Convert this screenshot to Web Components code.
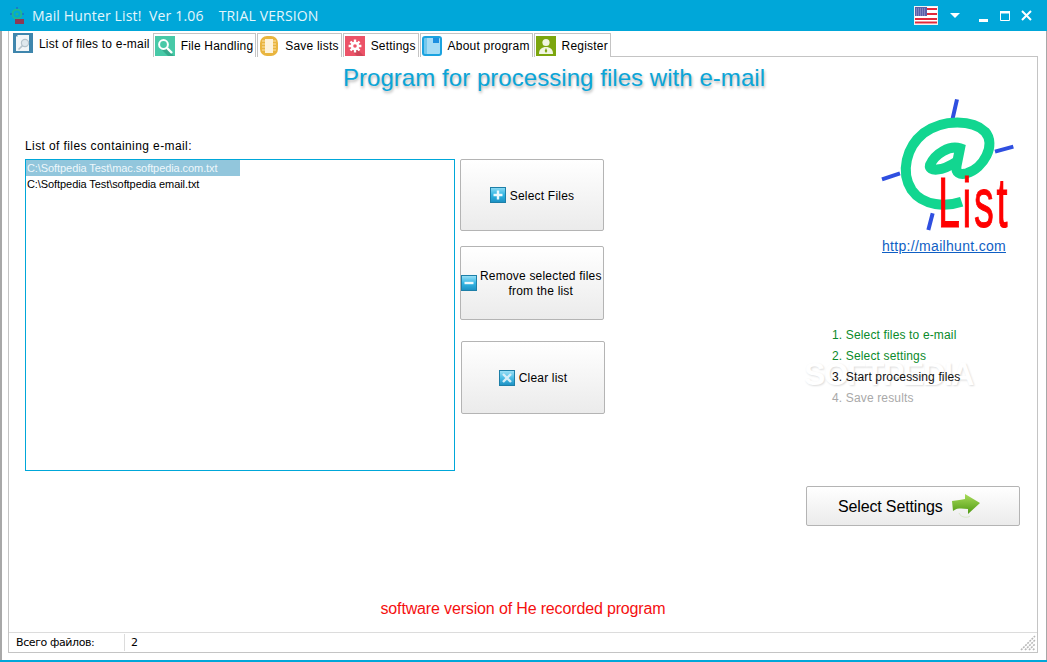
<!DOCTYPE html>
<html>
<head>
<meta charset="utf-8">
<title>Mail Hunter List!</title>
<style>
html, body { margin: 0; padding: 0; height: 100%; background: #fff; overflow: hidden; }
</style>
</head>
<body>
<mh-window>
  <mh-titlebar slot="title"></mh-titlebar>
  <mh-tabs slot="tabs">
    <mh-tab icon="doc" active>List of files to e-mail</mh-tab>
    <mh-tab icon="search">File Handling</mh-tab>
    <mh-tab icon="chip">Save lists</mh-tab>
    <mh-tab icon="gear">Settings</mh-tab>
    <mh-tab icon="book">About program</mh-tab>
    <mh-tab icon="user">Register</mh-tab>
  </mh-tabs>
  <mh-page slot="page">
    <mh-filelist slot="list" label="List of files containing e-mail:">
      <mh-file selected>C:\Softpedia Test\mac.softpedia.com.txt</mh-file>
      <mh-file>C:\Softpedia Test\softpedia email.txt</mh-file>
    </mh-filelist>
    <mh-button slot="actions" icon="plus" style="height:72px;margin-bottom:15px">Select Files</mh-button>
    <mh-button slot="actions" icon="minus" tight style="height:74px;margin-bottom:21px">Remove selected files<br>from the list</mh-button>
    <mh-button slot="actions" icon="cross" style="height:73px;margin-left:1px">Clear list</mh-button>
    <mh-logo slot="side"></mh-logo>
    <mh-steps slot="side"></mh-steps>
    <mh-next slot="side">Select Settings</mh-next>
  </mh-page>
  <mh-statusbar slot="status" label="Всего файлов:" value="2"></mh-statusbar>
</mh-window>

<script>
const ICONS = {
  doc: `<svg width="20" height="20" viewBox="0 0 20 20"><rect width="20" height="20" fill="#3f86ad"/><path d="M5 2h11v16H3V4z" fill="#f2f6f8"/><path d="M5 2v2H3z" fill="#b9d3e0"/><circle cx="12" cy="10" r="3.6" fill="#dfe8ed" stroke="#b5c3cb" stroke-width="1.2"/><path d="M9.5 12.6L5.5 16.5" stroke="#b5c3cb" stroke-width="1.6"/></svg>`,
  search: `<svg width="20" height="20" viewBox="0 0 20 20"><rect width="20" height="20" fill="#47c9a7"/><path d="M12 13l7 7h-6l-6-6z" fill="#36a98b"/><circle cx="8.5" cy="8.5" r="4.4" fill="none" stroke="#fff" stroke-width="2"/><path d="M12 12l5 5" stroke="#fff" stroke-width="2.4"/></svg>`,
  chip: `<svg width="20" height="20" viewBox="0 0 20 20"><rect x="1" width="18" height="20" rx="7" fill="#e9b53f"/><rect x="6" y="3" width="8" height="14" fill="#fdf3dc"/><path d="M3 5h3M3 8h3M3 11h3M3 14h3M14 5h3M14 8h3M14 11h3M14 14h3" stroke="#fbe4ae" stroke-width="1.2"/></svg>`,
  gear: `<svg width="20" height="20" viewBox="0 0 20 20"><rect width="20" height="20" fill="#ec5368"/><path d="M12 13l7 7h-7l-5-5z" fill="#cf4659"/><g stroke="#fff" stroke-width="2.4"><path d="M10 3.6v12.8M3.6 10h12.8M5.5 5.5l9 9M14.5 5.5l-9 9"/></g><circle cx="10" cy="10" r="4.2" fill="#fff"/><circle cx="10" cy="10" r="1.8" fill="#ec5368"/></svg>`,
  book: `<svg width="20" height="20" viewBox="0 0 20 20"><rect x="1" y="1" width="18" height="18" rx="2" fill="#a5dcf5" stroke="#1ba3e0" stroke-width="2"/><path d="M2 1h3v18H2z" fill="#1ba3e0" opacity=".35"/><rect x="11" y="2" width="6" height="5" fill="#1b8fe0"/></svg>`,
  user: `<svg width="20" height="20" viewBox="0 0 20 20"><rect width="20" height="20" fill="#7ca60e"/><circle cx="10" cy="6.5" r="3.6" fill="#f1f5e2"/><path d="M3 18c0-5 3-7 7-7s7 2 7 7z" fill="#f1f5e2"/><path d="M10 12l-1.3 3 1.3 2 1.3-2z" fill="#7ca60e"/></svg>`,
  plus: `<svg width="16" height="16" viewBox="0 0 16 16"><defs><linearGradient id="p" x1="0" y1="0" x2="0" y2="1"><stop offset="0" stop-color="#8fdcf5"/><stop offset=".5" stop-color="#2fb4e2"/><stop offset="1" stop-color="#1b8fc2"/></linearGradient></defs><rect x=".5" y=".5" width="15" height="15" fill="url(#p)" stroke="#1d7fa8"/><path d="M8 3.5v9M3.5 8h9" stroke="#eef9fd" stroke-width="2.4"/></svg>`,
  minus: `<svg width="16" height="16" viewBox="0 0 16 16"><defs><linearGradient id="m" x1="0" y1="0" x2="0" y2="1"><stop offset="0" stop-color="#9fe2f7"/><stop offset=".5" stop-color="#35b6e4"/><stop offset="1" stop-color="#1b8fc2"/></linearGradient></defs><rect x=".5" y=".5" width="15" height="15" fill="url(#m)" stroke="#1d7fa8"/><path d="M3.5 8h9" stroke="#eef9fd" stroke-width="2.4"/></svg>`,
  cross: `<svg width="16" height="16" viewBox="0 0 16 16"><defs><linearGradient id="c" x1="0" y1="0" x2="0" y2="1"><stop offset="0" stop-color="#9fe2f7"/><stop offset=".5" stop-color="#4bbde6"/><stop offset="1" stop-color="#1b8fc2"/></linearGradient></defs><rect x=".5" y=".5" width="15" height="15" fill="url(#c)" stroke="#1d7fa8"/><path d="M4 4l8 8M12 4l-8 8" stroke="#d5eef8" stroke-width="2.4"/></svg>`
};

class MhWindow extends HTMLElement {
  connectedCallback() {
    const sd = this.attachShadow({ mode: 'open' });
    sd.innerHTML = `<style>
      :host { display: flex; flex-direction: column; width: 1047px; height: 662px; box-sizing: border-box;
        font-family: "Liberation Sans", Arial, sans-serif; color: #000; background: #fff;
        border-left: 2px solid #a8a8a8; border-right: 1px solid #a8a8a8; position: relative; }
      .top { margin: 0 -1px 0 -2px; }
      .body { flex: 1; display: flex; flex-direction: column; margin: 0 8px 7px 6px; min-height: 0; }
      .panel { flex: 1; display: flex; flex-direction: column; border: 1px solid #c4c4c4; border-top: 0; min-height: 0; }
      .foot { height: 2px; background: #00a7d9; margin: 0 -1px 0 -2px; }
    </style>
    <div class="top"><slot name="title"></slot></div>
    <div class="body">
      <slot name="tabs"></slot>
      <div class="panel">
        <slot name="page"></slot>
        <slot name="status"></slot>
      </div>
    </div>
    <div class="foot"></div>`;
  }
}

class MhTitlebar extends HTMLElement {
  connectedCallback() {
    const sd = this.attachShadow({ mode: 'open' });
    sd.innerHTML = `<style>
      :host { display: flex; align-items: center; height: 31px; background: #00a7d9; color: #e4f6fc;
        font: 14px "Open Sans", sans-serif; letter-spacing: .15px; padding-left: 9px; }
      .app { margin-right: 7px; display: block; }
      .name { white-space: pre; flex: 1; }
      .ctl { display: flex; align-items: center; }
      svg { display: block; }
    </style>
    <svg class="app" width="16" height="18" viewBox="0 0 16 18"><circle cx="8" cy="7" r="4.5" fill="none" stroke="#20b890" stroke-width="2"/><circle cx="8" cy="7" r="1.6" fill="#20b890"/><path d="M8 0v2M1 7h2M13 7h2" stroke="#2a50c8"/><rect x="6" y="12" width="9" height="5" fill="#8c3a55"/></svg>
    <div class="name">Mail Hunter List!  Ver 1.06    TRIAL VERSION</div>
    <div class="ctl">
      <svg width="24" height="19" viewBox="0 0 24 19" style="margin-right:12px">
        <rect width="24" height="19" fill="#f2f2f2"/>
        <rect x="1" y="1" width="22" height="17" fill="#fff"/>
        <path d="M1 3h22M1 8h22M1 13h22M1 16.5h22" stroke="#e3293a" stroke-width="2"/>
        <rect x="1" y="1" width="12" height="9" fill="#5a5fa8"/>
        <path d="M2 3h10M2 5h10M2 7h10M2 9h10" stroke="#a9abd6" stroke-dasharray="1 1"/>
      </svg>
      <svg width="10" height="5" viewBox="0 0 10 5" style="margin-right:19px"><path d="M0 0h10L5 5z" fill="#fff"/></svg>
      <svg width="10" height="3" viewBox="0 0 10 3" style="margin:9px 11px 0 0"><rect width="9" height="3" fill="#fff"/></svg>
      <svg width="10" height="10" viewBox="0 0 10 10" style="margin-right:11px"><path d="M.5 1h9v8.5h-9z" fill="none" stroke="#fff"/><rect width="10" height="2.5" fill="#fff"/></svg>
      <svg width="11" height="11" viewBox="0 0 11 11" style="margin-right:15px"><path d="M1 1l9 9M10 1l-9 9" stroke="#fff" stroke-width="2"/></svg>
    </div>`;
  }
}

class MhTabs extends HTMLElement {
  connectedCallback() {
    const sd = this.attachShadow({ mode: 'open' });
    sd.innerHTML = `<style>
      :host { display: flex; align-items: flex-end; height: 26px; box-sizing: border-box;
        border-bottom: 1px solid #c4c4c4; border-left: 1px solid #c4c4c4; }
      .row { display: flex; align-items: flex-end; height: 26px; margin-bottom: -1px; }
    </style><div class="row"><slot></slot></div>`;
  }
}

class MhTab extends HTMLElement {
  connectedCallback() {
    const sd = this.attachShadow({ mode: 'open' });
    const active = this.hasAttribute('active');
    sd.innerHTML = `<style>
      :host { display: flex; box-sizing: border-box; font-size: 12px; letter-spacing: .2px; white-space: nowrap; background: #fff; }
      .tab { display: flex; align-items: center; gap: 6px; box-sizing: border-box; height: 24px;
        padding: 0 2px 0 1px; border: 1px solid #c4c4c4; border-bottom: 0; margin-left: 1px; }
      .tab.on { height: 26px; border: 0; margin-left: 0; padding: 0 2px 3px 4px; }
      .tab.on span { padding-top: 2px; }
      svg { display: block; }
    </style>
    <div class="tab ${active ? 'on' : ''}">${ICONS[this.getAttribute('icon')]}<span><slot></slot></span></div>`;
  }
}

class MhPage extends HTMLElement {
  connectedCallback() {
    const sd = this.attachShadow({ mode: 'open' });
    sd.innerHTML = `<style>
      :host { display: flex; flex-direction: column; flex: 1; min-height: 0; position: relative; }
      h1 { margin: 6px 0 3px; padding-left: 62px; text-align: center; font: 400 24px/30px "Liberation Sans", Arial, sans-serif;
        letter-spacing: .05px; color: #0aa5d8; text-shadow: 1px 2px 3px rgba(0,0,0,.3); }
      .row { flex: 1; display: grid; grid-template-columns: 430px 145px 1fr; column-gap: 5px; padding-left: 16px; min-height: 0; }
      .actions { display: flex; flex-direction: column; padding-top: 63px; }
      .side { display: flex; flex-direction: column; }
      .red { text-align: center; color: #f51010; font-size: 16px; letter-spacing: -.15px; line-height: 18px; margin-bottom: 14px; }
      .mark { position: absolute; left: 795px; top: 299px; font: 700 32px "Liberation Sans", sans-serif; letter-spacing: -1.6px;
        color: #fff; text-shadow: 1px 1px 2px #dcdcdc; pointer-events: none; }
    </style>
    <h1>Program for processing files with e-mail</h1>
    <div class="row">
      <div><slot name="list"></slot></div>
      <div class="actions"><slot name="actions"></slot></div>
      <div class="side"><slot name="side"></slot></div>
    </div>
    <div class="red">software version of He recorded program</div>
    <div class="mark">SOFTPEDIA</div>`;
  }
}

class MhFilelist extends HTMLElement {
  connectedCallback() {
    const sd = this.attachShadow({ mode: 'open' });
    sd.innerHTML = `<style>
      :host { display: block; padding-top: 43px; }
      .lab { font-size: 12px; line-height: 14px; margin-bottom: 6px; letter-spacing: .4px; }
      .box { box-sizing: border-box; width: 430px; height: 312px; border: 1px solid #00a7d9; background: #fff; }
    </style>
    <div class="lab">${this.getAttribute('label')}</div>
    <div class="box"><slot></slot></div>`;
  }
}

class MhFile extends HTMLElement {
  connectedCallback() {
    const sd = this.attachShadow({ mode: 'open' });
    const sel = this.hasAttribute('selected');
    sd.innerHTML = `<style>
      :host { display: block; width: 214px; height: 16px; font-size: 11px; letter-spacing: -.08px; line-height: 16px; padding-left: 1px; box-sizing: border-box; white-space: nowrap;
        background: ${sel ? '#92c6dc' : 'transparent'}; color: ${sel ? '#eef7fb' : '#000'}; }
    </style><slot></slot>`;
  }
}

class MhButton extends HTMLElement {
  connectedCallback() {
    const sd = this.attachShadow({ mode: 'open' });
    const tight = this.hasAttribute('tight');
    sd.innerHTML = `<style>
      :host { display: flex; box-sizing: border-box; width: 144px; flex: none; letter-spacing: .2px;
        border: 1px solid #b4b4b4; border-radius: 2px; background: linear-gradient(#fff, #ebebeb); font-size: 12px; }
      .in { flex: 1; display: flex; align-items: center; justify-content: ${tight ? 'flex-start' : 'center'}; gap: ${tight ? '3px' : '4px'}; }
      span { text-align: center; line-height: 15px; white-space: nowrap; padding-top: 2px; }
      svg { display: block; flex: none; }
    </style>
    <div class="in">${ICONS[this.getAttribute('icon')]}<span><slot></slot></span></div>`;
  }
}

class MhLogo extends HTMLElement {
  connectedCallback() {
    const sd = this.attachShadow({ mode: 'open' });
    sd.innerHTML = `<style>
      :host { display: flex; flex-direction: column; align-items: center; width: 170px; margin-left: 250px; }
      svg { display: block; }
      a { font-size: 14px; line-height: 16px; letter-spacing: .3px; margin: 2px 2px 0 0; color: #0f5fc4; text-decoration: underline; }
    </style>
    <svg width="170" height="140" viewBox="0 18 510 420">
      <g stroke="#2f4fe0" stroke-width="12" fill="none">
        <path d="M291 28L278 85M460 170L405 185M66 268L120 250M218 370L205 420"/>
      </g>
      <path d="M305 335C260 350 190 350 155 300C120 245 140 170 190 130C250 85 340 90 375 125C410 165 370 235 320 250C300 255 285 250 290 225L300 175C270 165 225 190 210 225C205 245 245 245 290 215" fill="none" stroke="#12d690" stroke-width="30"/>
      <text transform="translate(234 410) scale(.56 1)" font-family="Liberation Sans" font-size="212" letter-spacing="14" fill="#ff0000" stroke="#ff0000" stroke-width="3">List</text>
    </svg>
    <a href="http://mailhunt.com">http://mailhunt.com</a>`;
  }
}

class MhSteps extends HTMLElement {
  connectedCallback() {
    const sd = this.attachShadow({ mode: 'open' });
    sd.innerHTML = `<style>
      :host { display: block; margin: 71px 0 0 222px; position: relative; z-index: 1; }
      ol { margin: 0; padding: 0; list-style: none; font-size: 12px; letter-spacing: .15px; line-height: 21px; }
      .done { color: #0a8a2a; }
      .now { color: #111; }
      .todo { color: #a9a9a9; }
    </style>
    <ol>
      <li class="done">1. Select files to e-mail</li>
      <li class="done">2. Select settings</li>
      <li class="now">3. Start processing files</li>
      <li class="todo">4. Save results</li>
    </ol>`;
  }
}

class MhNext extends HTMLElement {
  connectedCallback() {
    const sd = this.attachShadow({ mode: 'open' });
    sd.innerHTML = `<style>
      :host { display: flex; align-items: center; box-sizing: border-box; width: 214px; height: 40px; margin: 77px 0 0 196px;
        border: 1px solid #b4b4b4; border-radius: 2px; background: linear-gradient(#fff, #ebebeb); font-size: 16px; letter-spacing: -.15px; padding-left: 31px; gap: 9px; }
      span { padding-top: 2px; }
      svg { display: block; }
    </style>
    <span><slot></slot></span>
    <svg width="30" height="26" viewBox="0 0 30 26">
      <defs><linearGradient id="g" x1="0" y1="0" x2="0" y2="1"><stop offset="0" stop-color="#a9dc5a"/><stop offset="1" stop-color="#4f9a12"/></linearGradient></defs>
      <path d="M1 8c5-1 10-1 13-2V1l15 9-12 11v-5C10 15 5 15 2 18z" fill="url(#g)"/>
      <path d="M8 20c2 5 9 5 11 3" fill="none" stroke="#d8e8c8" stroke-width="1"/>
    </svg>`;
  }
}

class MhStatusbar extends HTMLElement {
  connectedCallback() {
    const sd = this.attachShadow({ mode: 'open' });
    sd.innerHTML = `<style>
      :host { display: flex; align-items: center; height: 20px; box-sizing: border-box; border-top: 1px solid #dcdcdc;
        font: 11px "DejaVu Sans", sans-serif; position: relative; }
      .lab { width: 116px; padding-left: 7px; box-sizing: border-box; border-right: 1px solid #dcdcdc; height: 17px; line-height: 17px; letter-spacing: -.4px; }
      .val { padding-left: 6px; line-height: 17px; }
      svg { position: absolute; right: 1px; bottom: 1px; }
    </style>
    <div class="lab">${this.getAttribute('label')}</div>
    <div class="val">${this.getAttribute('value')}</div>
    <svg width="16" height="16" viewBox="0 0 16 16"><path d="M1 15L15 1M5 15L15 5M9 15l6-6M13 15l2-2" stroke="#b8b8b8" stroke-width="1.6" stroke-dasharray="2 1"/></svg>`;
  }
}

customElements.define('mh-window', MhWindow);
customElements.define('mh-titlebar', MhTitlebar);
customElements.define('mh-tabs', MhTabs);
customElements.define('mh-tab', MhTab);
customElements.define('mh-page', MhPage);
customElements.define('mh-filelist', MhFilelist);
customElements.define('mh-file', MhFile);
customElements.define('mh-button', MhButton);
customElements.define('mh-logo', MhLogo);
customElements.define('mh-steps', MhSteps);
customElements.define('mh-next', MhNext);
customElements.define('mh-statusbar', MhStatusbar);
</script>
</body>
</html>
